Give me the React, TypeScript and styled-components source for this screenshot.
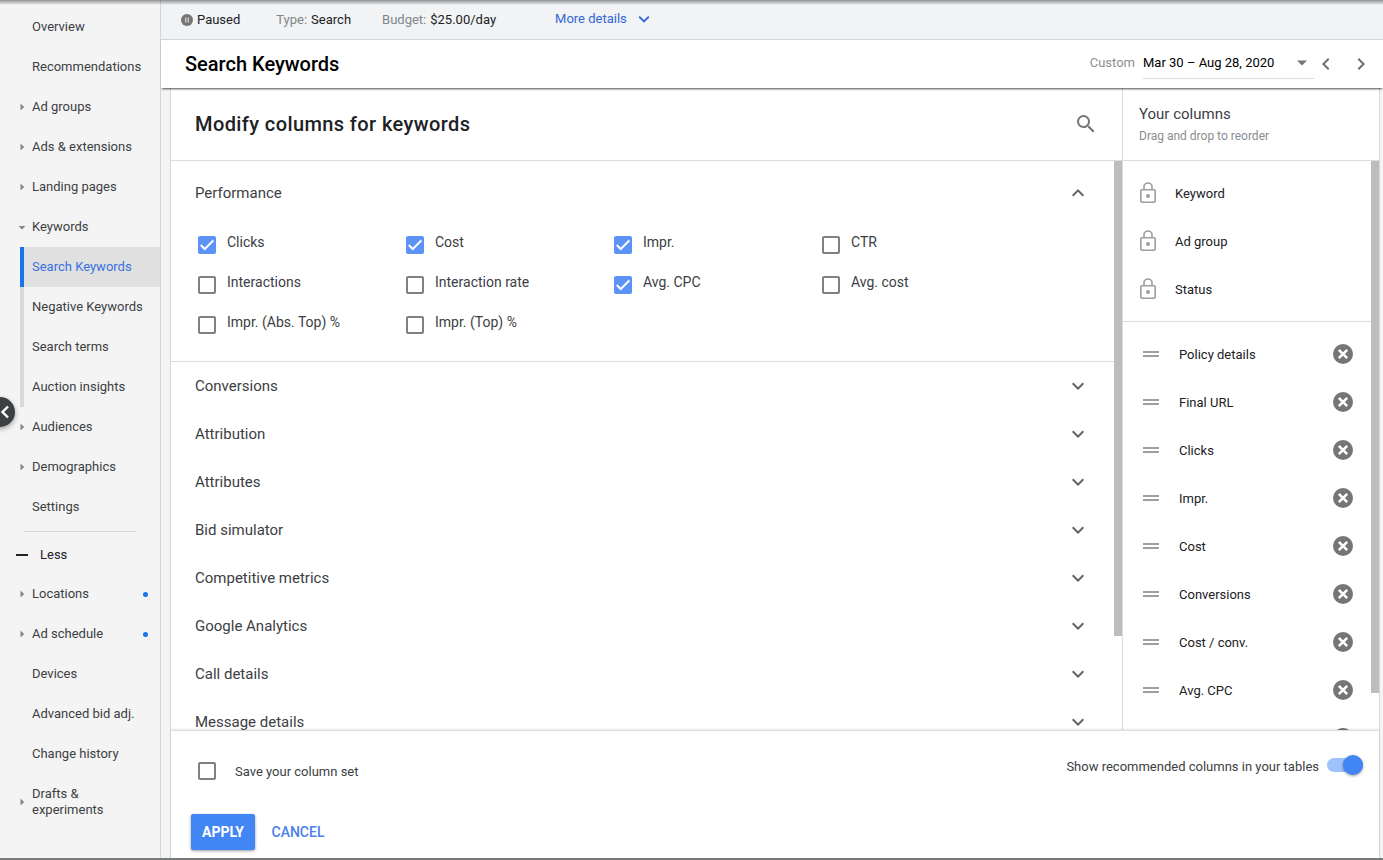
import React, { useId } from "react";
import styled, { createGlobalStyle, css } from "styled-components";

const GlobalStyle = createGlobalStyle`
  *, *::before, *::after { box-sizing: border-box; }
  body {
    margin: 0;
    font-family: Roboto, "Liberation Sans", sans-serif;
    font-size: 13px;
    line-height: 16px;
    color: #3c4043;
    background: #f3f4f4;
  }
  button, input, select { font: inherit; color: inherit; margin: 0; }
  button { padding: 0; border: 0; background: none; cursor: pointer; }
  a { color: inherit; text-decoration: none; }
  h1, h2, h3, p, ul { margin: 0; padding: 0; font-weight: 400; }
  ul { list-style: none; }
  svg { display: block; flex: none; }
`;

/* ---------- page frame ---------- */

const Shell = styled.div`
  position: relative;
  display: flex;
  height: 100vh;
  overflow: hidden;
  border-bottom: 2px solid #77797b;

  &::before {
    content: "";
    position: absolute;
    inset: 0 0 auto;
    z-index: 3;
    height: 5px;
    background: linear-gradient(rgba(0, 0, 0, 0.4), rgba(0, 0, 0, 0));
    pointer-events: none;
  }
`;

const Main = styled.main`
  flex: 1;
  min-width: 0;
  display: flex;
  flex-direction: column;
`;

/* ---------- side navigation ---------- */

const Sidebar = styled.nav`
  flex: none;
  width: 161px;
  padding-top: 7px;
  background: #f4f4f4;
  border-right: 1px solid #d2d4d6;
  overflow: hidden;
`;

const NavLink = styled.a`
  display: flex;
  align-items: center;
  min-height: 40px;
  padding: 12px 12px 12px 18px;
`;

const CaretSlot = styled.span`
  flex: none;
  width: 14px;
`;

const NavLabel = styled.span`
  flex: 1;
`;

const NewDot = styled.span`
  width: 5px;
  height: 5px;
  border-radius: 50%;
  background: #1a73e8;
`;

const SubLink = styled.a<{ $active?: boolean }>`
  display: flex;
  align-items: center;
  height: 40px;
  margin-left: 20px;
  padding-left: 8px;
  border-left: 4px solid ${(p) => (p.$active ? "#1a73e8" : "#d9d9d9")};
  background: ${(p) => (p.$active ? "#e0e0e0" : "none")};
  color: ${(p) => (p.$active ? "#3871e0" : "inherit")};
`;

const NavDivider = styled.hr`
  height: 1px;
  margin: 4px 24px 2px;
  border: 0;
  background: #d2d4d6;
`;

const LessButton = styled.button`
  display: flex;
  align-items: center;
  gap: 12px;
  width: 100%;
  height: 40px;
  padding-top: 1px;
  padding-left: 16px;
  color: #202124;
`;

const CollapseButton = styled.button`
  position: absolute;
  top: 397px;
  left: -15px;
  z-index: 2;
  width: 30px;
  height: 30px;
  padding-left: 13px;
  border-radius: 50%;
  background: #3c4043;
  color: #fff;
  box-shadow: 0 2px 5px rgba(0, 0, 0, 0.35);
`;

/* ---------- status and title bars ---------- */

const StatusBar = styled.div`
  flex: none;
  display: flex;
  align-items: center;
  height: 40px;
  padding-left: 20px;
  background: #f1f3f4;
  border-bottom: 1px solid #d2d6da;
`;

const StatusItem = styled.span<{ $state?: boolean }>`
  display: flex;
  align-items: center;
  gap: 4px;
  margin-right: ${(p) => (p.$state ? 36 : 31)}px;
  color: #202124;
`;

const Muted = styled.span`
  color: #80868b;
`;

const MoreButton = styled.button`
  display: flex;
  align-items: center;
  gap: 6px;
  height: 24px;
  margin-left: 28px;
  padding-bottom: 2px;
  color: #3367d6;
`;

const TitleBar = styled.header`
  position: relative;
  z-index: 1;
  flex: none;
  display: flex;
  align-items: center;
  justify-content: space-between;
  height: 48px;
  padding: 0 10px 0 24px;
  background: #fff;
  box-shadow: 0 2px 2px -1px rgba(0, 0, 0, 0.7);
`;

const PageTitle = styled.h1`
  font-size: 20px;
  line-height: 24px;
  font-weight: 500;
  color: #000;
`;

const DateControls = styled.div`
  display: flex;
  align-items: center;
`;

const DateField = styled.div`
  display: flex;
  align-items: center;
  gap: 8px;
  padding-bottom: 2px;
`;

const DateLabel = styled.label`
  color: #8f8f8f;
`;

const SelectBox = styled.span`
  display: grid;
  align-items: center;
  width: 171px;
  height: 32px;
  border-bottom: 1px solid #dadce0;

  > * { grid-area: 1 / 1; }
  > svg { justify-self: end; margin-right: 6px; pointer-events: none; }
`;

const DateSelect = styled.select`
  width: 100%;
  height: 30px;
  padding: 0;
  border: 0;
  background: none;
  appearance: none;
  color: #000;
`;

const StepButton = styled.button`
  width: 24px;
  height: 24px;
  margin-right: 11px;
  color: #6b6e71;
  &:last-child { margin-right: 0; }
`;

/* ---------- column picker ---------- */

const Panel = styled.section`
  flex: 1;
  min-height: 0;
  display: flex;
  flex-direction: column;
  margin: 0 3px 0 9px;
  background: #fff;
  border: solid #d6d8da;
  border-width: 0 1px;
`;

const Columns = styled.div`
  flex: 1;
  min-height: 0;
  display: flex;
`;

const Picker = styled.div`
  flex: 1;
  min-width: 0;
  display: flex;
  flex-direction: column;
`;

const Chosen = styled.aside`
  flex: none;
  width: 257px;
  display: flex;
  flex-direction: column;
  border-left: 1px solid #dadce0;
`;

const headerBox = css`
  flex: none;
  height: 73px;
  border-bottom: 1px solid #dadce0;
`;

const PickerHeader = styled.div`
  ${headerBox}
  display: flex;
  align-items: center;
  justify-content: space-between;
  padding: 0 24px;
`;

const PickerTitle = styled.h2`
  font-size: 20px;
  line-height: 24px;
  font-weight: 500;
  letter-spacing: 0.02em;
  color: #202124;
`;

const IconButton = styled.button`
  width: 24px;
  height: 24px;
  color: #757575;
`;

const ChosenHeader = styled.div`
  ${headerBox}
  display: flex;
  flex-direction: column;
  gap: 4px;
  padding: 16px 16px 0;
`;

const ChosenTitle = styled.h2`
  font-size: 15px;
  line-height: 20px;
`;

const ChosenHint = styled.p`
  font-size: 12px;
  line-height: 16px;
  color: #8a8d90;
`;

const ScrollArea = styled.div`
  flex: 1;
  min-height: 0;
  display: flex;
`;

const ScrollContent = styled.div`
  flex: 1;
  min-width: 0;
  overflow-y: auto;
  scrollbar-width: none;
`;

const ScrollThumb = styled.div<{ $size: number }>`
  flex: none;
  width: 8px;
  height: ${(p) => p.$size}%;
  background: #bdbdbd;
`;

const GroupButton = styled.button<{ $open?: boolean }>`
  display: flex;
  align-items: center;
  justify-content: space-between;
  width: 100%;
  height: ${(p) => (p.$open ? 64 : 48)}px;
  padding: 0 24px;
  font-size: 15px;
  line-height: 20px;
  text-align: left;

  > svg { color: #5f6368; }
`;

const MetricGrid = styled.div`
  display: grid;
  grid-template-columns: repeat(auto-fill, 208px);
  grid-auto-rows: 40px;
  padding: 8px 24px;
  border-bottom: 1px solid #dadce0;
`;

const CheckLabel = styled.label<{ $wide?: boolean }>`
  display: flex;
  align-items: ${(p) => (p.$wide ? "center" : "flex-start")};
  gap: ${(p) => (p.$wide ? 19 : 11)}px;
  padding-left: 3px;
  font-size: ${(p) => (p.$wide ? 13 : 14)}px;
  line-height: 18px;
`;

const CheckText = styled.span<{ $wide?: boolean }>`
  padding-top: ${(p) => (p.$wide ? 2 : 0)}px;
`;

const CheckBox = styled.span<{ $lowered?: boolean }>`
  flex: none;
  display: grid;
  margin-top: ${(p) => (p.$lowered ? 3 : 0)}px;
  > * { grid-area: 1 / 1; }
  > svg { color: #fff; pointer-events: none; }
`;

const CheckInput = styled.input`
  width: 18px;
  height: 18px;
  border: 2px solid #808080;
  border-radius: 2px;
  appearance: none;
  background: #fff;
  &:checked { border-color: #5c93f7; background: #5c93f7; }
`;

const ChosenList = styled.ul<{ $divided?: boolean }>`
  padding: 8px 16px;
  border-bottom: ${(p) => (p.$divided ? "1px solid #dadce0" : "0")};
`;

const ChosenItem = styled.li<{ $locked?: boolean }>`
  display: flex;
  align-items: center;
  gap: ${(p) => (p.$locked ? 18 : 16)}px;
  height: 48px;
  color: #202124;

  > svg { color: #9e9e9e; }
  > span { flex: 1; padding-top: 2px; }
`;

/* ---------- footer ---------- */

const Footer = styled.footer`
  position: relative;
  flex: none;
  display: flex;
  justify-content: space-between;
  height: 128px;
  padding: 24px 16px 8px 20px;
  background: #fff;
  border-top: 1px solid #dcdcdc;
  box-shadow: 0 -1px 2px rgba(0, 0, 0, 0.1);
`;

const FooterSide = styled.div`
  display: flex;
  flex-direction: column;
  justify-content: space-between;
  padding-top: 6px;
`;

const SaveRow = styled.div`
  padding-left: 4px;
`;

const Actions = styled.div`
  display: flex;
`;

const ActionButton = styled.button<{ $primary?: boolean }>`
  width: ${(p) => (p.$primary ? 64 : 86)}px;
  height: 36px;
  border-radius: 2px;
  font-size: 14px;
  font-weight: ${(p) => (p.$primary ? 700 : 500)};
  color: ${(p) => (p.$primary ? "#fff" : "#4a80ec")};
  background: ${(p) => (p.$primary ? "#4285f4" : "none")};
  box-shadow: ${(p) => (p.$primary ? "0 1px 3px rgba(0, 0, 0, 0.4)" : "none")};
`;

const SwitchLabel = styled.label`
  display: flex;
  align-items: center;
  gap: 8px;
  height: 20px;

  > span { padding-top: 3px; }
`;

const Switch = styled.input`
  display: flex;
  align-items: center;
  justify-content: flex-end;
  width: 36px;
  height: 14px;
  border-radius: 7px;
  appearance: none;
  background: #a0c2fa;

  &::before {
    content: "";
    width: 20px;
    height: 20px;
    flex: none;
    border-radius: 50%;
    background: #4285f4;
    box-shadow: 0 1px 3px rgba(0, 0, 0, 0.4);
  }
  &:not(:checked) { justify-content: flex-start; background: #bdbdbd; }
`;

/* ---------- icons ---------- */

const CHEVRONS = {
  down: "M7.4 8.6 12 13.2l4.6-4.6L18 10l-6 6-6-6z",
  up: "M7.4 15.4 12 10.8l4.6 4.6L18 14l-6-6-6 6z",
  left: "M15.4 7.4 14 6l-6 6 6 6 1.4-1.4L10.8 12z",
  right: "M8.6 16.6 10 18l6-6-6-6-1.4 1.4L13.2 12z",
};

function Chevron({ to, size = 24 }: { to: keyof typeof CHEVRONS; size?: number }) {
  return (
    <svg width={size} height={size} viewBox="0 0 24 24" fill="currentColor" aria-hidden="true">
      <path d={CHEVRONS[to]} />
    </svg>
  );
}

function Caret({ open }: { open?: boolean }) {
  return (
    <svg width="8" height="8" viewBox="0 0 8 8" fill="#80868b" aria-hidden="true">
      <path d={open ? "M0.5 3h7L4 6.5z" : "M2.5 0.5v7L6.2 4z"} />
    </svg>
  );
}

const PauseIcon = () => (
  <svg width="12" height="12" viewBox="0 0 12 12" aria-hidden="true">
    <circle cx="6" cy="6" r="6" fill="#757575" />
    <path d="M4 3.5h1.4v5H4zM6.6 3.5H8v5H6.6z" fill="#d0d0d0" />
  </svg>
);

const SearchIcon = () => (
  <svg width="24" height="24" viewBox="0 0 24 24" fill="currentColor" aria-hidden="true">
    <path d="M15.5 14h-.79l-.28-.27A6.47 6.47 0 0 0 16 9.5 6.5 6.5 0 1 0 9.5 16c1.61 0 3.09-.59 4.23-1.57l.27.28v.79l5 4.99L20.49 19l-4.99-5zm-6 0a4.5 4.5 0 1 1 0-9 4.5 4.5 0 0 1 0 9z" />
  </svg>
);

const LockIcon = () => (
  <svg width="18" height="24" viewBox="0 0 18 24" fill="none" stroke="currentColor" strokeWidth="1.6" aria-hidden="true">
    <rect x="1.8" y="8.8" width="14.4" height="12.4" rx="1" />
    <path d="M5 8.8V6a4 4 0 0 1 8 0v2.8" />
    <circle cx="9" cy="15" r="2" fill="currentColor" stroke="none" />
  </svg>
);

const DragIcon = () => (
  <svg width="24" height="24" viewBox="0 0 24 24" fill="currentColor" aria-hidden="true">
    <path d="M4 9h16v2H4zM4 13h16v2H4z" />
  </svg>
);

const RemoveIcon = () => (
  <svg width="24" height="24" viewBox="0 0 24 24" aria-hidden="true">
    <circle cx="12" cy="12" r="10" fill="#757575" />
    <path d="m7.8 7.8 8.4 8.4m0-8.4-8.4 8.4" stroke="#fff" strokeWidth="2.6" />
  </svg>
);

/* ---------- data ---------- */

type NavEntry = { label: string; caret?: boolean; open?: boolean; dot?: boolean };

const NAV_TOP: NavEntry[] = [
  { label: "Overview" },
  { label: "Recommendations" },
  { label: "Ad groups", caret: true },
  { label: "Ads & extensions", caret: true },
  { label: "Landing pages", caret: true },
  { label: "Keywords", caret: true, open: true },
];
const NAV_SUB = ["Search Keywords", "Negative Keywords", "Search terms", "Auction insights"];
const NAV_MIDDLE: NavEntry[] = [
  { label: "Audiences", caret: true },
  { label: "Demographics", caret: true },
  { label: "Settings" },
];
const NAV_MORE: NavEntry[] = [
  { label: "Locations", caret: true, dot: true },
  { label: "Ad schedule", caret: true, dot: true },
  { label: "Devices" },
  { label: "Advanced bid adj." },
  { label: "Change history" },
  { label: "Drafts & experiments", caret: true },
];

const METRICS: [string, boolean][] = [
  ["Clicks", true],
  ["Cost", true],
  ["Impr.", true],
  ["CTR", false],
  ["Interactions", false],
  ["Interaction rate", false],
  ["Avg. CPC", true],
  ["Avg. cost", false],
  ["Impr. (Abs. Top) %", false],
  ["Impr. (Top) %", false],
];

const GROUPS = [
  "Conversions",
  "Attribution",
  "Attributes",
  "Bid simulator",
  "Competitive metrics",
  "Google Analytics",
  "Call details",
  "Message details",
];

const LOCKED = ["Keyword", "Ad group", "Status"];
const CHOSEN = [
  "Policy details",
  "Final URL",
  "Clicks",
  "Impr.",
  "Cost",
  "Conversions",
  "Cost / conv.",
  "Avg. CPC",
  "",
];

/* ---------- components ---------- */

function NavItems({ items }: { items: NavEntry[] }) {
  return (
    <>
      {items.map((item) => (
        <NavLink href="#" key={item.label}>
          <CaretSlot>{item.caret && <Caret open={item.open} />}</CaretSlot>
          <NavLabel>{item.label}</NavLabel>
          {item.dot && <NewDot />}
        </NavLink>
      ))}
    </>
  );
}

function Check({ label, checked, wide }: { label: string; checked?: boolean; wide?: boolean }) {
  const id = useId();
  return (
    <CheckLabel htmlFor={id} $wide={wide}>
      <CheckBox $lowered={!wide}>
        <CheckInput id={id} type="checkbox" defaultChecked={checked} />
        <svg width="18" height="18" viewBox="0 0 18 18" fill="none" stroke="currentColor" strokeWidth="2" aria-hidden="true">
          <path d="m2.8 9 4 4 8.5-8.5" />
        </svg>
      </CheckBox>
      <CheckText $wide={wide}>{label}</CheckText>
    </CheckLabel>
  );
}

export default function App() {
  return (
    <>
      <GlobalStyle />
      <Shell>
        <Sidebar>
          <NavItems items={NAV_TOP} />
          {NAV_SUB.map((label, i) => (
            <SubLink href="#" key={label} $active={i === 0}>
              {label}
            </SubLink>
          ))}
          <NavItems items={NAV_MIDDLE} />
          <NavDivider />
          <LessButton type="button">
            <svg width="12" height="2" viewBox="0 0 12 2" aria-hidden="true">
              <path d="M0 0h12v2H0z" fill="currentColor" />
            </svg>
            Less
          </LessButton>
          <NavItems items={NAV_MORE} />
        </Sidebar>
        <CollapseButton type="button" aria-label="Collapse navigation">
          <svg width="14" height="16" viewBox="0 0 14 16" fill="none" stroke="currentColor" strokeWidth="2.4" aria-hidden="true">
            <path d="M10 2.5 4.5 8l5.500 5.500" />
          </svg>
        </CollapseButton>

        <Main>
          <StatusBar>
            <StatusItem $state>
              <PauseIcon />
              Paused
            </StatusItem>
            <StatusItem>
              <Muted>Type:</Muted>
              Search
            </StatusItem>
            <StatusItem>
              <Muted>Budget:</Muted>
              $25.00/day
            </StatusItem>
            <MoreButton type="button">
              More details
              <Chevron to="down" size={22} />
            </MoreButton>
          </StatusBar>

          <TitleBar>
            <PageTitle>Search Keywords</PageTitle>
            <DateControls>
              <DateField>
                <DateLabel htmlFor="range">Custom</DateLabel>
                <SelectBox>
                  <DateSelect id="range">
                    <option>Mar 30 – Aug 28, 2020</option>
                  </DateSelect>
                  <svg width="12" height="6" viewBox="0 0 12 6" aria-hidden="true">
                    <path d="M1 0.500h10L6 5.500z" fill="#757575" />
                  </svg>
                </SelectBox>
              </DateField>
              <StepButton type="button" aria-label="Previous period">
                <Chevron to="left" />
              </StepButton>
              <StepButton type="button" aria-label="Next period">
                <Chevron to="right" />
              </StepButton>
            </DateControls>
          </TitleBar>

          <Panel>
            <Columns>
              <Picker>
                <PickerHeader>
                  <PickerTitle>Modify columns for keywords</PickerTitle>
                  <IconButton type="button" aria-label="Search columns">
                    <SearchIcon />
                  </IconButton>
                </PickerHeader>
                <ScrollArea>
                  <ScrollContent>
                    <GroupButton type="button" $open aria-expanded="true">
                      Performance
                      <Chevron to="up" />
                    </GroupButton>
                    <MetricGrid>
                      {METRICS.map(([label, checked]) => (
                        <Check key={label} label={label} checked={checked} />
                      ))}
                    </MetricGrid>
                    {GROUPS.map((label) => (
                      <GroupButton type="button" key={label} aria-expanded="false">
                        {label}
                        <Chevron to="down" />
                      </GroupButton>
                    ))}
                  </ScrollContent>
                  <ScrollThumb $size={83.5} />
                </ScrollArea>
              </Picker>

              <Chosen>
                <ChosenHeader>
                  <ChosenTitle>Your columns</ChosenTitle>
                  <ChosenHint>Drag and drop to reorder</ChosenHint>
                </ChosenHeader>
                <ScrollArea>
                  <ScrollContent>
                    <ChosenList $divided>
                      {LOCKED.map((label) => (
                        <ChosenItem key={label} $locked>
                          <LockIcon />
                          <span>{label}</span>
                        </ChosenItem>
                      ))}
                    </ChosenList>
                    <ChosenList>
                      {CHOSEN.map((label) => (
                        <ChosenItem key={label}>
                          <DragIcon />
                          <span>{label}</span>
                          <IconButton type="button" aria-label={`Remove ${label || "column"}`}>
                            <RemoveIcon />
                          </IconButton>
                        </ChosenItem>
                      ))}
                    </ChosenList>
                  </ScrollContent>
                  <ScrollThumb $size={93.5} />
                </ScrollArea>
              </Chosen>
            </Columns>

            <Footer>
              <FooterSide>
                <SaveRow>
                  <Check label="Save your column set" wide />
                </SaveRow>
                <Actions>
                  <ActionButton type="button" $primary>
                    APPLY
                  </ActionButton>
                  <ActionButton type="button">CANCEL</ActionButton>
                </Actions>
              </FooterSide>
              <SwitchLabel htmlFor="recommended">
                <span>Show recommended columns in your tables</span>
                <Switch id="recommended" type="checkbox" role="switch" defaultChecked />
              </SwitchLabel>
            </Footer>
          </Panel>
        </Main>
      </Shell>
    </>
  );
}
